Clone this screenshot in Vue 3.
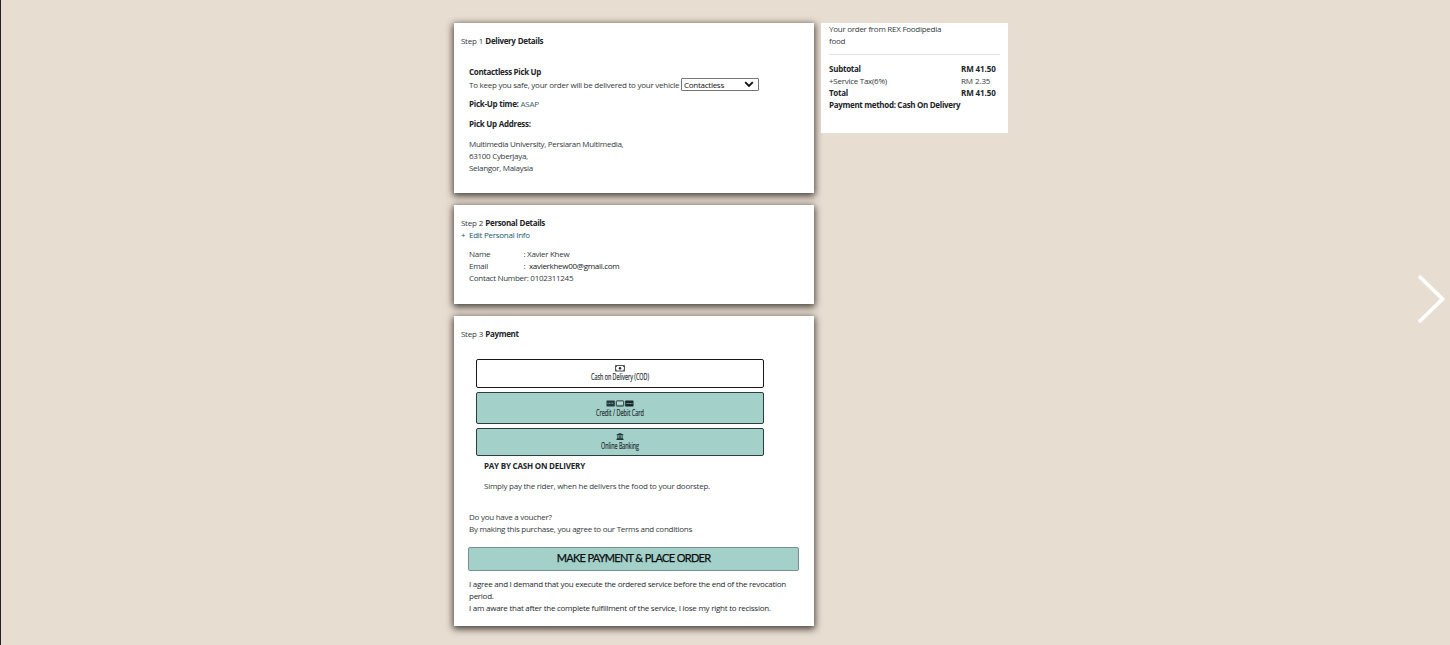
<script setup>
const address = ['Multimedia University, Persiaran Multimedia,', '63100 Cyberjaya,', 'Selangor, Malaysia']
const totals = [
  { label: 'Subtotal', value: 'RM 41.50', strong: true },
  { label: '+Service Tax(6%)', value: 'RM 2.35', strong: false },
  { label: 'Total', value: 'RM 41.50', strong: true },
]
</script>

<template>
  <main class="page">
    <div class="steps">
      <section class="card delivery">
        <div class="step">Step 1 <b>Delivery Details</b></div>
        <div class="body">
          <div><b class="pickup">Contactless Pick Up</b></div>
          <div class="row">
            <span class="safe">To keep you safe, your order will be delivered to your vehicle</span>
            <span class="select">Contactless
              <svg width="10" height="7" viewBox="0 0 10 7"><path d="M1.2 1.2 5 5 8.800 1.200" fill="none" stroke="#111" stroke-width="1.900" /></svg>
            </span>
          </div>
          <p><b>Pick-Up time:</b> <span class="asap">ASAP</span></p>
          <p><b>Pick Up Address:</b></p>
          <p class="address"><span v-for="line in address" :key="line">{{ line }}</span></p>
        </div>
      </section>

      <section class="card personal">
        <div class="step">Step 2 <b>Personal Details</b></div>
        <div class="edit"><span class="plus">+</span>Edit Personal Info</div>
        <div class="body info">
          <div class="pair"><span>Name</span><span>: Xavier Khew</span></div>
          <div class="pair"><span>Email</span><span>:&nbsp; <i>xavierkhew00@gmail.com</i></span></div>
          <div>Contact Number: 0102311245</div>
        </div>
      </section>

      <section class="card payment">
        <div class="step">Step 3 <b>Payment</b></div>
        <div class="methods">
          <div class="method cash">
            <svg class="icon" width="10" height="7" viewBox="0 0 10 7"><rect x=".6" y=".6" width="8.800" height="5.400" fill="none" stroke="#333b3d" stroke-width=".9" /><ellipse cx="5" cy="3.300" rx="1.200" ry="1.400" fill="#222b2d" /><path d="M1 1h1v.8H1zM8 1h1v.8H8zM1 4.800h1v.8H1zM8 4.800h1v.8H8z" fill="#222b2d" /></svg>
            <svg class="label" width="64" height="14"><text x="3" y="9.500" textLength="58" lengthAdjust="spacingAndGlyphs">Cash on Delivery (COD)</text></svg>
          </div>
          <div class="method credit">
            <svg class="icon" width="28" height="7" viewBox="0 0 28 7">
              <rect x=".5" y=".4" width="8.300" height="6.200" rx=".5" fill="#263b3c" /><path d="M1.500 3.400h6" stroke="#75918f" stroke-width="1.300" stroke-dasharray="1 .5" />
              <rect x="10.300" y=".9" width="7.400" height="5.200" rx=".5" fill="#b8d9d4" stroke="#263b3c" /><path d="M11 5.300h6" stroke="#456260" stroke-width=".7" />
              <rect x="19.200" y=".4" width="8.300" height="6.200" rx=".5" fill="#182729" /><path d="M20.500 3.500h6" stroke="#8aa9a5" stroke-width="1" stroke-dasharray="1.300 .4" />
            </svg>
            <svg class="label" width="64" height="14"><text x="8" y="10" textLength="48" lengthAdjust="spacingAndGlyphs">Credit / Debit Card</text></svg>
          </div>
          <div class="method bank">
            <svg class="icon" width="8" height="7" viewBox="0 0 8 7"><path d="M4 0 .6 1.500v.7h6.800v-.7zM1.400 2.500v2.700H1v.6H.5V7h7V5.800H7v-.6h-.4V2.500h-1v2.700h-.9V2.500H3.300v2.700h-.9V2.500z" fill="#20393a" /></svg>
            <svg class="label" width="64" height="14"><text x="13" y="10" textLength="38" lengthAdjust="spacingAndGlyphs">Online Banking</text></svg>
          </div>
        </div>
        <div class="cod">
          <div><b class="heading">PAY BY CASH ON DELIVERY</b></div>
          <p class="rider">Simply pay the rider, when he delivers the food to your doorstep.</p>
        </div>
        <div class="terms">
          <div>Do you have a voucher?</div>
          <div>By making this purchase, you agree to our Terms and conditions</div>
          <button>MAKE PAYMENT &amp; PLACE ORDER</button>
          <div class="legal">
            <div>I agree and I demand that you execute the ordered service before the end of the revocation</div>
            <div>period.</div>
            <div class="aware">I am aware that after the complete fulfillment of the service, I lose my right to recission.</div>
          </div>
        </div>
      </section>
    </div>

    <aside class="summary">
      <div>Your order from REX Foodipedia</div>
      <div>food</div>
      <hr />
      <div v-for="row in totals" :key="row.label" class="total" :class="{ strong: row.strong }">
        <span>{{ row.label }}</span><span class="amount">{{ row.value }}</span>
      </div>
      <div><b class="pickup">Payment method: Cash On Delivery</b></div>
    </aside>

    <svg class="next" width="28" height="50" viewBox="0 0 28 50"><path d="M2 2 25.500 25 2 48" fill="none" stroke="#fff" stroke-width="3.700" /></svg>
  </main>
</template>

<style>
body { margin: 0; }
</style>

<style scoped>
* { box-sizing: border-box; }
.page {
  position: relative;
  display: flex;
  align-items: flex-start;
  gap: 7px;
  height: 645px;
  padding: 23px 0 0 453px;
  border-left: 1px solid #202329;
  background: #e8ddd1;
  overflow: hidden;
  color: #343a40;
  font: 8px/12px "Open Sans", "Noto Sans", sans-serif;
  letter-spacing: -.265px;
  white-space: nowrap;
}
b, .strong { font-weight: 700; color: #212529; }
p { margin: 0; }
.steps { display: flex; flex-direction: column; gap: 12px; width: 360px; }
.card { padding: 12px 8px 0 7px; background: #fff; box-shadow: 0 2px 7px 1px rgba(25, 20, 18, .8); }
.step b { letter-spacing: -.34px; }
.step { word-spacing: .4px; }
.delivery { height: 170px; }
.personal { height: 99px; }
.payment { height: 310px; }
.body { padding: 19px 0 0 8px; }
.pickup { letter-spacing: -.32px; }
.heading { letter-spacing: -.21px; }
.row { display: flex; align-items: center; height: 13px; margin-bottom: 7px; }
.safe { width: 210px; letter-spacing: -.25px; }
.select {
  display: flex; align-items: center; justify-content: space-between;
  width: 78px; height: 13px; margin-left: 2px; padding: 0 4px 0 2px;
  border: 1px solid #767676; border-radius: 1px; color: #111;
}
.body p { margin-bottom: 8px; }
.asap { color: #42606b; }
.address { letter-spacing: -.3px; }
.address span { display: block; }
.edit { color: #17596b; }
.plus { display: inline-block; width: 8px; }
.info { padding-top: 7px; letter-spacing: -.29px; }
.pair { display: grid; grid-template-columns: 54.5px auto; }
.pair i { font-style: normal; color: #16191c; }
.methods { display: flex; flex-direction: column; width: 288px; margin: 19px 0 0 15px; gap: 4px; }
.method {
  display: flex; flex-direction: column; align-items: center;
  border: 1px solid #2b3d3d; border-radius: 2px; background: #a3d1ca;
}
.cash { height: 29px; padding-top: 5px; border-color: #16191a; background: #fff; }
.credit { height: 32px; padding-top: 7px; }
.bank { height: 28px; padding-top: 4px; }
.icon { flex: none; }
.label {
  flex: none; margin-top: -1px; overflow: visible;
  font: 9px "Open Sans", sans-serif; letter-spacing: 0; fill: #22292c; stroke: #22292c; stroke-width: .2px;
}
.cash .label { margin-top: -2px; }
.cod { padding: 4px 0 0 23px; }
.rider { margin-top: 8px; letter-spacing: -.25px; }
.terms { padding: 19px 0 0 8px; }
button {
  display: block; width: 331px; height: 24px; margin: 12px 0 7px -1px; padding: 0 0 3px;
  border: 1px solid #78908f; border-radius: 2px; background: #a3d1ca; color: #0b0e0f;
  font: 400 11px Lato, sans-serif; letter-spacing: -.74px; word-spacing: .3px; -webkit-text-stroke: .25px #0b0e0f;
}
.legal { color: #24282c; }
.aware { letter-spacing: -.25px; }
.summary { width: 187px; height: 110px; padding: 0 8px; background: #fff; }
hr { height: 1px; margin: 7px 0 8px; border: 0; background: #e2e2e2; }
.total { display: grid; grid-template-columns: 132px auto; }
.amount { letter-spacing: -.1px; }
.next { position: absolute; left: 1416px; top: 274px; }
</style>
